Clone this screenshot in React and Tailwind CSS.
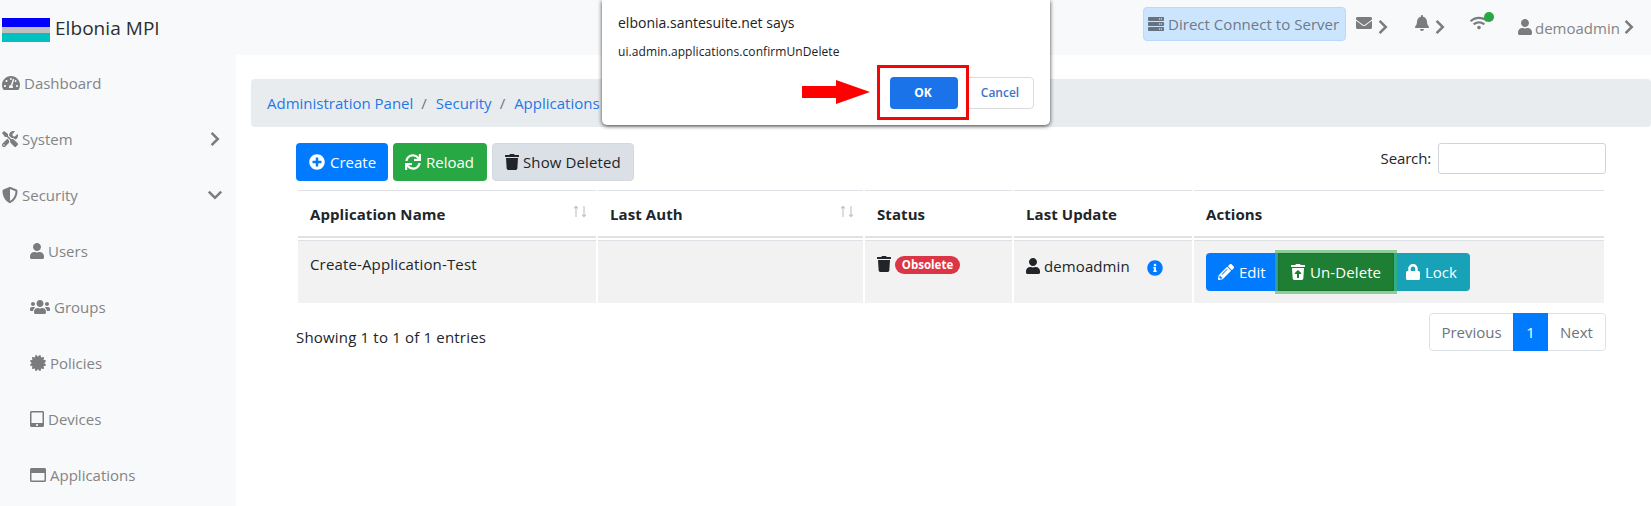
import {
  FaTachometerAlt, FaTools, FaShieldAlt, FaUser, FaUsers, FaCertificate, FaTabletAlt,
  FaRegWindowMaximize, FaServer, FaEnvelope, FaBell, FaWifi, FaPlusCircle, FaSync,
  FaTrash, FaPencilAlt, FaTrashRestore, FaLock, FaInfoCircle,
} from 'react-icons/fa';

const Chevron = ({ className = '' }) => (
  <svg viewBox="0 0 10 16" className={'h-4 w-2.5 shrink-0 ' + className} fill="none" stroke="currentColor" strokeWidth="2.5">
    <path d="M1.6 1.8 7.8 8l-6.2 6.2" />
  </svg>
);

const Sort = () => (
  <svg viewBox="0 0 14 13" className="-mt-1 mr-0.5 h-[13px] w-3.5 shrink-0" fill="none" stroke="#bfc1c3" strokeWidth="1.1">
    <path d="M3 12V1.5M1.2 3.4 3 1.4l1.8 2M11 1v10.5M9.2 9.6 11 11.6l1.8-2" />
  </svg>
);

const nav = [
  { icon: FaTachometerAlt, label: 'Dashboard', size: 'h-4 w-[18px]' },
  { icon: FaTools, label: 'System', size: 'size-4', open: false },
  { icon: FaShieldAlt, label: 'Security', size: 'size-4', open: true },
  { icon: FaUser, label: 'Users', size: 'h-4 w-3.5', sub: true },
  { icon: FaUsers, label: 'Groups', size: 'h-4 w-5', sub: true },
  { icon: FaCertificate, label: 'Policies', size: 'size-4', sub: true },
  { icon: FaTabletAlt, label: 'Devices', size: 'h-4 w-3.5', sub: true },
  { icon: FaRegWindowMaximize, label: 'Applications', size: 'size-4', sub: true },
];

function Sidebar() {
  return (
    <nav className="w-[236px] shrink-0 bg-[#f8f9fa] text-[#7b7c7d]">
      {nav.map(({ icon: Icon, label, size, sub, open }) => (
        <a key={label} className={'flex h-14 items-center gap-1 ' + (sub ? 'pl-[30px]' : 'pl-0.5')}>
          <Icon className={'shrink-0 ' + size} />
          <span className="text-[#838485]">{label}</span>
          {open !== undefined && (
            <Chevron className={'mr-4 ml-auto ' + (open ? 'rotate-90' : '')} />
          )}
        </a>
      ))}
    </nav>
  );
}

function Header() {
  return (
    <header className="flex h-[55px] shrink-0 bg-[#f8f9fa] text-[#7b7c7d]">
      <div className="mt-[18px] ml-0.5 flex h-6 w-12 flex-col">
        <div className="h-[9px] bg-[#0000fe]" />
        <div className="h-1.5 bg-[#c0c0c0]" />
        <div className="h-[9px] bg-[#00c0c0]" />
      </div>
      <div className="mt-[13px] ml-[5px] text-[19px] leading-[30px] tracking-[0.05px] text-[#2b2f33]">Elbonia MPI</div>
      <div className="mt-[7px] ml-auto flex h-[34px] w-[203px] items-center gap-1 rounded border border-[#b8daff] bg-[#cce5ff] pl-1 text-[#66727f]">
        <FaServer className="size-4" />
        <span className="tracking-[0.03px] text-[#6e7a87]">Direct Connect to Server</span>
      </div>
      <FaEnvelope className="mt-[15px] ml-[10px] size-4" />
      <Chevron className="mt-[19px] ml-1.5" />
      <FaBell className="mt-[15px] ml-[27px] h-4 w-3.5" />
      <Chevron className="mt-[19px] ml-1.5" />
      <div className="relative mt-[15px] ml-[25px] h-4 w-[18px]">
        <FaWifi className="h-4 w-[18px]" />
        <span className="absolute -top-[3px] left-3.5 size-2.5 rounded-full bg-[#28a745]" />
      </div>
      <FaUser className="mt-[19px] ml-[30px] h-4 w-3.5" />
      <span className="mt-4 ml-[3px] w-[85px] leading-6 text-[#838485]">demoadmin</span>
      <Chevron className="mt-[19px] mr-[17px] ml-1" />
    </header>
  );
}

const Btn = ({ className, children }) => (
  <button className={'flex h-[38px] items-center gap-[5px] ' + className}>{children}</button>
);

function Dialog() {
  return (
    <div className="absolute top-0 left-[602px] h-[125px] w-[448px] rounded-b-[5px] bg-white text-[#202124] shadow-[0_1px_4px_rgba(0,0,0,0.75)]">
      <div className="pt-[13px] pl-4 text-[14px] leading-5">elbonia.santesuite.net says</div>
      <div className="pt-[10px] pl-4 text-[12px] leading-[18px] tracking-[0.08px]">ui.admin.applications.confirmUnDelete</div>
      <div className="mt-4 flex justify-end gap-2 pr-4 text-[12px] font-semibold">
        <button className="h-8 w-[68px] rounded bg-[#1a73e8] pr-0.5 font-bold text-white">OK</button>
        <button className="h-8 w-[68px] rounded border border-[#dadce0] text-[#3f74c8]">Cancel</button>
      </div>
      <div className="absolute top-[65px] left-[275px] h-[55px] w-[92px] border-3 border-[#f50505]" />
      <svg viewBox="0 0 68 24" className="absolute top-[80px] left-[200px] h-6 w-[68px]" fill="#ff0000">
        <path d="M0 6h34V0l34 12-34 12v-6H0z" />
      </svg>
    </div>
  );
}

const grid = 'grid grid-cols-[298px_265px_147px_178px_410px] gap-x-0.5 px-0.5';
const cell = 'border-t border-[#dee2e6] px-3';

export default function App() {
  return (
    <div className="relative flex h-[506px] w-[1651px] flex-col overflow-hidden bg-white font-['Open_Sans',sans-serif] text-[15px] leading-6 text-[#212529]">
      <Header />
      <div className="flex flex-1">
        <Sidebar />
        <main className="flex-1">
          <div className="mt-6 ml-[15px] flex h-12 items-center gap-2 rounded bg-[#e9ecef] pl-4 text-[#1f78e6]">
            <a>Administration Panel</a>
            <span className="w-[6.5px] text-[#6c757d]">/</span>
            <a>Security</a>
            <span className="w-[6.5px] text-[#6c757d]">/</span>
            <a>Applications</a>
          </div>
          <div className="mt-4 ml-[60px] w-[1310px]">
            <div className="flex">
              <Btn className="w-[92px] rounded bg-[#007bff] pl-[13px] text-white"><FaPlusCircle className="size-4" />Create</Btn>
              <Btn className="ml-[5px] w-[94px] rounded bg-[#28a745] pl-3 text-white"><FaSync className="size-4" />Reload</Btn>
              <Btn className="ml-[5px] w-[142px] rounded border border-[#d3d9df] bg-[#dae0e5] pl-3"><FaTrash className="-mr-px h-4 w-3.5" /><span className="tracking-[0.12px]">Show Deleted</span></Btn>
              <label className="ml-auto flex h-[31px] items-center gap-[7px]">
                <span className="-mt-0.5 tracking-[-0.15px]">Search:</span>
                <input className="h-[31px] w-[168px] rounded-[3px] border border-[#ced4da] bg-white" />
              </label>
            </div>
            <div className={'mt-[9px] font-bold ' + grid}>
              {['Application Name', 'Last Auth', 'Status', 'Last Update', 'Actions'].map((h, i) => (
                <div key={h} className={cell + ' flex h-12 items-center justify-between border-b-2 pr-[7px] tracking-[0.08px]'}>
                  {h}
                  {i < 2 && <Sort />}
                </div>
              ))}
            </div>
            <div className={'mt-0.5 ' + grid}>
              <div className={cell + ' h-[63px] bg-[#f2f2f2] pt-[11px] tracking-[0.15px]'}>Create-Application-Test</div>
              <div className={cell + ' bg-[#f2f2f2]'} />
              <div className={cell + ' flex items-start bg-[#f2f2f2] pt-[15px]'}>
                <FaTrash className="h-4 w-3.5" />
                <span className="ml-1 h-[18px] w-[65px] rounded-full bg-[#dc3545] text-center text-[11.5px] leading-[18px] font-bold text-white">Obsolete</span>
              </div>
              <div className={cell + ' flex items-start bg-[#f2f2f2] pt-[13px]'}>
                <FaUser className="mt-1 h-4 w-3.5" />
                <span className="ml-1 w-[86px] tracking-[0.1px]">demoadmin</span>
                <FaInfoCircle className="mt-1.5 ml-[17px] size-4 text-[#007bff]" />
              </div>
              <div className={cell + ' flex items-start bg-[#f2f2f2] pt-3 text-white'}>
                <Btn className="w-[72px] rounded-l bg-[#007bff] pl-3"><FaPencilAlt className="size-4" />Edit</Btn>
                <Btn className="z-10 w-[116px] border border-[#1c7430] bg-[#1e7e34] pl-3 tracking-[0.1px] ring-3 ring-[#48b461]/60"><FaTrashRestore className="h-4 w-3.5" />Un-Delete</Btn>
                <Btn className="w-[76px] rounded-r bg-[#17a2b8] pl-3"><FaLock className="h-4 w-3.5" />Lock</Btn>
              </div>
            </div>
            <div className="flex justify-between pt-2.5">
              <div className="mt-3 tracking-[0.18px]">Showing 1 to 1 of 1 entries</div>
              <div className="flex h-[38px] w-[177px] rounded border border-[#dee2e6] text-[#6c757d]">
                <span className="w-[83px] text-center leading-9">Previous</span>
                <span className="-my-px h-[38px] w-[35px] bg-[#007bff] text-center leading-[38px] text-white">1</span>
                <span className="flex-1 text-center leading-9">Next</span>
              </div>
            </div>
          </div>
        </main>
      </div>
      <Dialog />
    </div>
  );
}
